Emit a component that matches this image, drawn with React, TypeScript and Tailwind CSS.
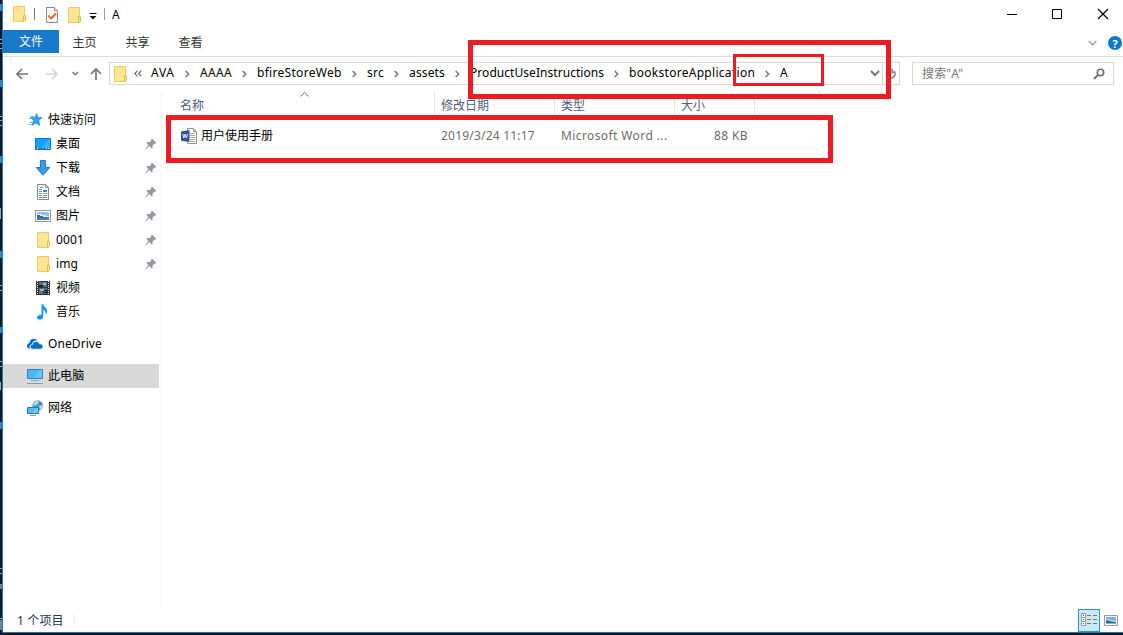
import type { ReactNode } from "react";

const Folder = () => (
  <svg width="16" height="16" viewBox="0 0 16 16">
    <path d="M2.5.5h11v15h-11z" fill="#ffe694" stroke="#eecb5c" />
    <path d="M14 0h2v9h-2z" fill="#fff" />
    <path d="M12.500 9.500h2v5l-1 1h-1z" fill="#ffe694" stroke="#e8bd3f" />
  </svg>
);

const Pin = () => (
  <svg width="12" height="12" viewBox="0 0 12 12" fill="#8f99a3">
    <path d="M7 .6L11.4 5l-1 .8-.9-.2-2 2 .2 2-.9.9-2.5-2.5L1 11.3l-.7-.6 3.2-3.4L1.4 5l.9-.9 2.1.2 2.1-2-.3-.9z" />
  </svg>
);

const QuickAccess = () => (
  <svg width="16" height="16" viewBox="0 0 16 16">
    <path d="M8.600 1.500l1.300 4h4.300l-3.400 3 1 5-3.900-2.600-4 2.600 1.600-4.900-2.900-3.100h4.300z" fill="#2ba3ee" stroke="#1683cf" strokeWidth=".6" />
    <path d="M2.500 4.500h3M1 6.500h4M1.500 10.500h3M.5 12.500h3" stroke="#4fb5f0" strokeWidth="1" />
  </svg>
);

const Desktop = () => (
  <svg width="16" height="16" viewBox="0 0 16 16">
    <path d="M.5 2.500h15v11H.5z" fill="#14a0fb" stroke="#0878d0" />
    <path d="M6 12L14 3h1v9z" fill="#36b0ff" />
    <path d="M1 12.500h14" stroke="#0a86e0" />
    <path d="M2 12.500h1M11 12.500h1M13 12.500h1" stroke="#fff" />
  </svg>
);

const Download = () => (
  <svg width="16" height="16" viewBox="0 0 16 16">
    <path d="M5.5.5h5v7h4.3L8 15.3 1.2 7.500H5.500z" fill="#3d9aeb" stroke="#2879c8" />
  </svg>
);

const Document = () => (
  <svg width="16" height="16" viewBox="0 0 16 16">
    <path d="M2.500.5h8l3 3v12h-11z" fill="#fff" stroke="#8a8a8a" />
    <path d="M10.500.5v3h3" fill="none" stroke="#8a8a8a" />
    <path d="M5 3.500h3M4 5.500h3M4 7.500h3M4 9.500h3M8 9.500h4M4 11.500h3M8 11.500h4M4 13.500h8" stroke="#7c929f" />
    <path d="M8 6h4v2H8z" fill="#1f91d6" />
  </svg>
);

const Picture = () => (
  <svg width="16" height="16" viewBox="0 0 16 16" shapeRendering="crispEdges">
    <path d="M.5 2.500h15v11H.5z" fill="#fff" stroke="#999" />
    <path d="M2 4h12v8H2z" fill="#8dbef0" />
    <path d="M2 6h5v1h4v1h3v2H2z" fill="#d9edf4" />
    <path d="M2 7h3v1h3v1h6v1H2z" fill="#417467" />
    <path d="M2 10h12v2H2z" fill="#477fb5" />
  </svg>
);

const Video = () => (
  <svg width="16" height="16" viewBox="0 0 16 16" shapeRendering="crispEdges">
    <path d="M1 1h14v14H1z" fill="#333" />
    <path d="M2.500 1v14M13.500 1v14" stroke="#e5e5e5" strokeDasharray="1 1" />
    <path d="M4 2h8v5H4zM4 8h8v6H4z" fill="#3176bd" />
    <path d="M4 5h4v2H4zM8 10h4v3H8z" fill="#181e22" />
    <path d="M8 3h3v2H8zM5 9h4v2H5z" fill="#e6af2c" />
    <path d="M6 4h2v1H6zM9 11h2v1H9z" fill="#c54b27" />
    <path d="M4 12h4v1H4z" fill="#60923b" />
  </svg>
);

const Music = () => (
  <svg width="16" height="16" viewBox="0 0 16 16">
    <path d="M6.500.3h1.600c.4 2.600 4.500 3.800 4.100 7.200-.1 1.300-.8 2.300-1.700 3.100.6-2.400-.2-4-2.200-4.600v6.500c0 1.900-1.500 3.100-3.600 3.100-1.700 0-2.900-.9-2.700-2.400.2-1.700 2.500-2.900 4.500-2.300z" fill="#109cf5" />
  </svg>
);

const OneDrive = () => (
  <svg width="16" height="16" viewBox="0 0 16 16">
    <path d="M2.800 12.700C1 12.500 0 11.500 0 9.900 0 8.300 1 7.200 2.500 7c.2-2.900 2-4.300 4.300-4.300 1.700 0 3 .7 3.700 2-2.800-.5-4.700.8-5.300 3C3.200 8.200 2.200 10.600 2.800 12.700z" fill="#0870c9" />
    <path d="M5.800 13.200c-1.800 0-2.600-1-2.600-2.400 0-1.300.9-2.400 2.500-2.500.2-1.700 1.500-2.900 3.300-2.900 1.700 0 3 .9 3.400 2.400 2.200-.2 3.600.9 3.600 2.700 0 1.600-1.100 2.700-2.700 2.700z" fill="#0870c9" stroke="#fff" strokeWidth=".7" />
  </svg>
);

const Computer = () => (
  <svg width="16" height="16" viewBox="0 0 16 16">
    <path d="M.5 1.500h15v9H.5z" fill="#48b8fa" stroke="#397fad" />
    <path d="M7 10L13 2h2v8z" fill="#67c8ff" />
    <path d="M4 12.500h8" stroke="#85a5b9" />
    <path d="M0 15.500h16" stroke="#7899c4" />
  </svg>
);

const Network = () => (
  <svg width="16" height="16" viewBox="0 0 16 16">
    <circle cx="10.700" cy="5.600" r="5.300" fill="#5a9fc0" />
    <path d="M6 4.200L9 1l3 .2-1 2.400-3 1.800zM12 6l3-2 .5 3-2 3z" fill="#b7dce5" />
    <path d="M12 2l3 2-2 2z" fill="#34799e" />
    <path d="M.5 7.500h11v6H.5z" fill="#51bcf7" stroke="#267eae" />
    <path d="M5 13l5-5h1v5z" fill="#72ceff" />
    <path d="M3 15.500h6" stroke="#829eae" />
  </svg>
);

const Word = () => (
  <svg width="16" height="16" viewBox="0 0 16 16">
    <path d="M6.500.5h6l3 3v12h-9z" fill="#fff" stroke="#929292" />
    <path d="M12.500.5v3h3" fill="none" stroke="#929292" />
    <path d="M9 5.500h5M9 7.500h5M9 9.500h5M9 11.500h5M9 13.500h5" stroke="#a5a5a5" />
    <path d="M0 3.500L8.500 2v12L0 12.700z" fill="#2b579a" />
    <path d="M1.800 6l1.100 4 1.200-4 1.300 4 1.100-4" fill="none" stroke="#fff" strokeWidth=".9" />
  </svg>
);

const Chevron = () => (
  <svg width="5" height="8" viewBox="0 0 5 8" fill="none" stroke="#777" strokeWidth="1.500">
    <path d="M.7 1l3 3-3 3" />
  </svg>
);

const crumbs = [
  { text: "AVA", cls: "w-[49px]", spacing: "tracking-[0.7px]" },
  { text: "AAAA", cls: "w-[57px]", spacing: "tracking-[0.3px]" },
  { text: "bfireStoreWeb", cls: "w-[110px]", spacing: "tracking-[0.3px]" },
  { text: "src", cls: "w-[42px]", spacing: "tracking-[0.3px]" },
  { text: "assets", cls: "w-[61px]", spacing: "tracking-[0.15px]" },
  { text: "ProductUseInstructions", cls: "w-[159px]", spacing: "tracking-[0.05px]" },
  { text: "bookstoreApplication", cls: "w-[151px]", spacing: "tracking-[0.29px]" },
];

const quickItems: { label: string; icon: ReactNode; pinned?: boolean }[] = [
  { label: "桌面", icon: <Desktop />, pinned: true },
  { label: "下载", icon: <Download />, pinned: true },
  { label: "文档", icon: <Document />, pinned: true },
  { label: "图片", icon: <Picture />, pinned: true },
  { label: "0001", icon: <Folder />, pinned: true },
  { label: "img", icon: <Folder />, pinned: true },
  { label: "视频", icon: <Video /> },
  { label: "音乐", icon: <Music /> },
];

function RootItem({ icon, label, selected }: { icon: ReactNode; label: string; selected?: boolean }) {
  return (
    <div className={`flex h-6 w-[156px] items-center gap-[5px] pl-6 ${selected ? "bg-[#d9d9d9]" : ""}`}>
      {icon}
      <span className="tracking-[0.08px]">{label}</span>
    </div>
  );
}

function TitleBar() {
  return (
    <header className="flex h-[30px] shrink-0 items-center pb-[2px] pl-2">
      <Folder />
      <span className="ml-[7px] h-3 w-px bg-[#777]" />
      <svg className="mt-[2px] ml-[9px]" width="16" height="16" viewBox="0 0 16 16">
        <path d="M2.500.5h8l3 3v12h-11z" fill="#f8f8f8" stroke="#8a8a8a" />
        <path d="M10.500.5v3h3" fill="#fff" stroke="#8a8a8a" />
        <path d="M4.500 8.500l2.500 3 5-5" fill="none" stroke="#e8591c" strokeWidth="1.800" />
      </svg>
      <span className="mt-[2px] ml-[6px] flex"><Folder /></span>
      <svg className="mt-[4px] ml-[7px]" width="8" height="8" viewBox="0 0 8 8">
        <path d="M.5 1.500h7" stroke="#111" />
        <path d="M.5 4h7L4 7.500z" fill="#111" />
      </svg>
      <span className="ml-[7px] h-3 w-px bg-[#999]" />
      <span className="mt-[2px] ml-[7px]">A</span>
      <svg className="mr-[14px] ml-auto" width="102" height="12" viewBox="0 0 102 12" fill="none" stroke="#000">
        <path d="M0 6.500h10M45.500 1.500h9v9h-9z" />
        <path d="M91 1l10 10M101 1L91 11" strokeWidth="1.200" />
      </svg>
    </header>
  );
}

function Ribbon() {
  return (
    <nav className="flex h-[27px] shrink-0 border-b border-[#dadbdc] text-[#333]">
      <div className="flex h-[23px] w-14 items-center justify-center bg-[#1979ca] pt-px text-white">文件</div>
      <div className="flex h-[23px] w-[53px] items-center justify-center pt-[2px] pr-[2px]">主页</div>
      <div className="flex h-[23px] w-[53px] items-center justify-center pt-[2px] pr-[2px]">共享</div>
      <div className="flex h-[23px] w-[53px] items-center justify-center pt-[2px] pr-[2px]">查看</div>
      <div className="ml-auto flex h-[26px] items-center gap-[11px] pr-px">
        <svg width="9" height="6" viewBox="0 0 9 6" fill="none" stroke="#929292" strokeWidth="1.200"><path d="M.7 1l3.800 3.800L8.300 1" /></svg>
        <span className="flex size-[14px] items-center justify-center rounded-full bg-[#0878d5] text-[11px] leading-none font-bold text-white">?</span>
      </div>
    </nav>
  );
}

function AddressRow() {
  return (
    <div className="flex h-[35px] shrink-0 pt-[5px]">
      <div className="flex h-[23px] w-[106px] items-center pl-[13px]">
        <svg width="87" height="14" viewBox="0 0 87 14" fill="none" stroke="#757575" strokeWidth="1.700">
          <path d="M12 7H1M6 2L1 7l5 5" />
          <path d="M30 7h11M36 2l5 5-5 5" stroke="#d5d5d5" />
          <path d="M56.500 5l2.700 2.700L61.900 5" strokeWidth="1.500" />
          <path d="M80 13V2M75 7l5-5 5 5" />
        </svg>
      </div>
      <div className="flex h-[23px] w-[791px] items-center border border-[#d9d9d9] pl-[2px]">
        <Folder />
        <svg className="mr-[9px] ml-[6px]" width="8" height="7" viewBox="0 0 8 7" fill="none" stroke="#666" strokeWidth="1.100"><path d="M3.500.7L.8 3.500l2.700 2.800M7.300.7L4.600 3.500l2.700 2.800" /></svg>
        {crumbs.map((crumb) => (
          <span key={crumb.text} className={`flex shrink-0 items-center justify-between pr-[10px] ${crumb.cls}`}>
            <span className={`pb-[2px] whitespace-nowrap ${crumb.spacing}`}>{crumb.text}</span>
            <Chevron />
          </span>
        ))}
        <span className="pb-[2px]">A</span>
        <svg className="mr-[2px] ml-auto shrink-0" width="10" height="7" viewBox="0 0 10 7" fill="none" stroke="#777" strokeWidth="2"><path d="M1 1l4 4 4-4" /></svg>
        <div className="flex h-[21px] w-[17px] shrink-0 items-center justify-center border-l border-[#d9d9d9]">
          <svg width="12" height="12" viewBox="0 0 12 12" fill="none" stroke="#888" strokeWidth="1.700"><path d="M9 3a4.300 4.300 0 1 1-6.500 0M7 .8v3.500h3.500" /></svg>
        </div>
      </div>
      <div className="ml-3 flex h-[23px] w-[202px] items-center justify-between border border-[#d9d9d9] pr-2 pl-[9px] text-[#777]">
        <span className="tracking-[0.15px]">搜索"A"</span>
        <svg width="12" height="12" viewBox="0 0 12 12" fill="none" stroke="#707070" strokeWidth="1.600"><circle cx="7.500" cy="4.500" r="3.200" /><path d="M5 7L1 11" strokeWidth="2" /></svg>
      </div>
    </div>
  );
}

function Sidebar() {
  return (
    <aside className="flex w-[159px] shrink-0 flex-col border-r border-[#f2f2f2] pt-4">
      <div className="flex h-6 items-center gap-[5px] pl-[25px]"><QuickAccess /><span className="-ml-px">快速访问</span></div>
      {quickItems.map((item) => (
        <div key={item.label} className="flex h-6 items-center gap-[5px] pr-1 pl-8">
          {item.icon}
          <span className="tracking-[0.1px]">{item.label}</span>
          {item.pinned && <span className="ml-auto"><Pin /></span>}
        </div>
      ))}
      <div className="mt-2 flex flex-col gap-2">
        <RootItem label="OneDrive" icon={<OneDrive />} />
        <RootItem label="此电脑" icon={<Computer />} selected />
        <RootItem label="网络" icon={<Network />} />
      </div>
    </aside>
  );
}

function FileList() {
  return (
    <main className="flex grow flex-col">
      <div className="relative flex h-6 text-[#4c607a]">
        <div className="flex w-[273px] items-center border-r border-[#e5e5e5] pt-[3px] pl-[18px]">名称</div>
        <div className="flex w-[120px] items-center border-r border-[#e5e5e5] pt-[3px] pl-[6px]">修改日期</div>
        <div className="flex w-[120px] items-center border-r border-[#e5e5e5] pt-[3px] pl-[6px]">类型</div>
        <div className="flex w-[80px] items-center border-r border-[#e5e5e5] pt-[3px] pl-[6px]">大小</div>
        <svg className="absolute top-0 left-[138px]" width="9" height="5" viewBox="0 0 9 5" fill="none" stroke="#777"><path d="M.5 4.500l4-4 4 4" /></svg>
      </div>
      <div className="mt-2 flex h-[23px] items-center text-[#6d6d6d]">
        <div className="flex w-[273px] items-center gap-1 pl-[19px] text-black"><Word /><span>用户使用手册</span></div>
        <div className="w-[120px] pl-[6px] tracking-[0.21px] whitespace-nowrap">2019/3/24 11:17</div>
        <div className="w-[120px] pl-[6px] tracking-[0.4px] whitespace-nowrap">Microsoft Word ...</div>
        <div className="w-[80px] pr-[7px] text-right tracking-[0.4px]">88 KB</div>
      </div>
    </main>
  );
}

function StatusBar() {
  return (
    <footer className="flex h-6 shrink-0 items-center pl-[14px] text-[#25364d]">
      <span className="pt-[2px] tracking-[0.15px]">1 个项目</span>
      <span className="ml-[10px] h-3 w-px bg-[#eee]" />
      <div className="ml-auto flex h-[23px] w-[22px] items-center justify-center border border-[#2694d2] bg-[#cce8f6]">
        <svg width="16" height="14" viewBox="0 0 16 14">
          <path d="M.5.5h4v4h-4zM.5 4.500h4v4h-4zM.5 8.500h4v4h-4z" fill="#fff" stroke="#999" />
          <path d="M6 2.500h4M12 2.500h4M6 6.500h4M12 6.500h4M6 10.500h4M12 10.500h4" stroke="#777" />
          <path d="M2 2h1v1H2z" fill="#345" />
          <path d="M2 6h1v1H2z" fill="#168ced" />
          <path d="M2 10h1v1H2z" fill="#e12a28" />
        </svg>
      </div>
      <svg className="mr-[5px] ml-1" width="14" height="11" viewBox="0 0 14 11">
        <path d="M.5.5h13v10H.5z" fill="#fff" stroke="#999" />
        <path d="M2 2h10v7H2z" fill="#76b0ee" />
        <path d="M2 4l4 1 6 1v2H2z" fill="#dcedf2" />
        <path d="M2 5l6 1.500 4 .5v1H2z" fill="#386c66" />
      </svg>
    </footer>
  );
}

export default function App() {
  return (
    <div className="relative flex h-[635px] w-[1123px] overflow-hidden bg-[#171b20] font-['Noto_Sans','Noto_Sans_CJK_SC',sans-serif] text-[12px] leading-[16px] text-black">
      <svg className="shrink-0" width="2" height="635" viewBox="0 0 2 635">
        <path d="M0 4h2v7H0zM0 80h2v7H0zM0 156h2v7H0zM0 251h2v7H0zM0 327h2v6H0zM0 422h2v7H0z" fill="#2988d1" />
        <path d="M0 39h2v1H0zM0 43h2v1H0zM0 48h2v1H0zM0 116h2v1H0zM0 120h2v1H0zM0 125h2v1H0zM0 208h1v11H0zM0 285h2v1H0zM0 290h2v1H0zM0 361h2v1H0zM0 366h2v1H0zM0 382h1v8H0zM0 568h2v1H0zM0 573h2v1H0zM0 618h2v1H0z" fill="#a3a9ad" />
        <path d="M0 584h2v5H0z" fill="#8270af" />
        <path d="M0 620h2v10H0z" fill="#68869c" />
      </svg>
      <div className="flex h-[633px] w-[1121px] flex-col border-b border-l border-[#127bd0] bg-white">
        <TitleBar />
        <Ribbon />
        <AddressRow />
        <div className="flex min-h-0 grow"><Sidebar /><FileList /></div>
        <StatusBar />
      </div>
      <div className="absolute top-[40px] left-[468px] h-[59px] w-[423px] border-[5px] border-[#ed1c24]" />
      <div className="absolute top-[54px] left-[733px] h-[32px] w-[91px] border-[3px] border-[#ed1c24]" />
      <div className="absolute top-[115px] left-[166px] h-[48px] w-[667px] border-[5px] border-[#ed1c24]" />
    </div>
  );
}
